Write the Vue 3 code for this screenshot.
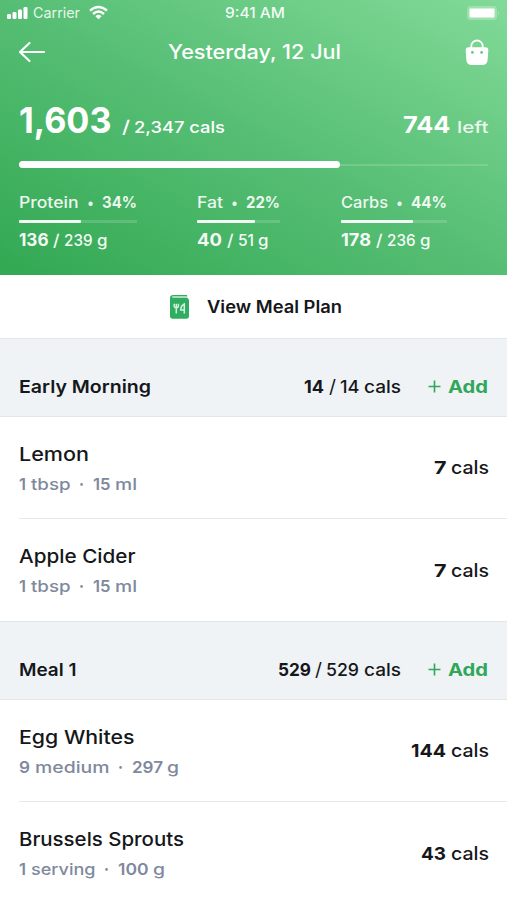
<script setup>
import { h } from 'vue'

// A run of text fitted to a set advance width; its box is as tall as its capitals,
// so the bottom edge of the box is the baseline.
const Word = ({ t, w, s = 17 }) => {
  const height = Math.round(s * 0.73)
  return h('svg', { class: 'word', width: w, height }, [
    h('text', { y: height, 'font-size': s, textLength: w, lengthAdjust: 'spacingAndGlyphs' }, t),
  ])
}
Word.props = ['t', 'w', 's']

const macros = [
  { name: 'Protein', nameW: 59.5, pct: '34%', pctW: 35, width: 118, fill: 52.5, eaten: '136', eatenW: 29.5, goal: '239', goalW: 28.5, goalG: 10.5 },
  { name: 'Fat', nameW: 26, pct: '22%', pctW: 34, width: 83, fill: 70, eaten: '40', eatenW: 25, goal: '51', goalW: 16, goalG: 10.5 },
  { name: 'Carbs', nameW: 47, pct: '44%', pctW: 36, width: 106, fill: 68, eaten: '178', eatenW: 30, goal: '236', goalW: 28.5, goalG: 10.5 },
]

const meals = [
  {
    name: 'Early Morning', nameW: 132, eaten: '14', eatenW: 20, goal: '14', goalW: 19.5,
    foods: [
      { name: 'Lemon', nameW: 70, n: '1', nW: 7, unit: 'tbsp', unitW: 39.5, q: '15', qW: 17.5, qUnit: 'ml', qUnitW: 22, cals: '7', calsW: 12.5 },
      { name: 'Apple Cider', nameW: 116.5, n: '1', nW: 7, unit: 'tbsp', unitW: 39.5, q: '15', qW: 17.5, qUnit: 'ml', qUnitW: 22, cals: '7', calsW: 12.5 },
    ],
  },
  {
    name: 'Meal 1', nameW: 57.5, eaten: '529', eatenW: 33, goal: '529', goalW: 33,
    foods: [
      { name: 'Egg Whites', nameW: 115.5, n: '9', nW: 11, unit: 'medium', unitW: 74.5, q: '297', qW: 31, qUnit: 'g', qUnitW: 12, cals: '144', calsW: 35 },
      { name: 'Brussels Sprouts', nameW: 165, n: '1', nW: 7, unit: 'serving', unitW: 64.5, q: '100', qW: 30.5, qUnit: 'g', qUnitW: 12, cals: '43', calsW: 25 },
    ],
  },
]
</script>

<template>
  <main class="screen">
    <header class="hero">
      <div class="status">
        <div class="carrier">
          <svg width="21" height="13" viewBox="0 0 21 13">
            <rect x="0" y="8" width="4" height="5" rx="1.2" />
            <rect x="5.5" y="6" width="4" height="7" rx="1.2" />
            <rect x="11" y="3.5" width="4" height="9.5" rx="1.2" />
            <rect x="16.5" y="1" width="4" height="12" rx="1.2" />
          </svg>
          <Word class="dim" t="Carrier" :w="47" :s="14.5" />
          <svg class="wifi" width="19" height="13" viewBox="0 0 19 13">
            <path d="M1 4.6Q9.5 -2.6 18 4.6" />
            <path d="M4 8Q9.5 3.2 15 8" />
            <path class="solid" d="M6.4 10.2Q9.5 7.4 12.6 10.2L9.5 13.2Z" />
          </svg>
        </div>
        <Word class="w5 time" t="9:41 AM" :w="60" :s="14.5" />
        <svg class="battery" width="33" height="14" viewBox="0 0 33 14">
          <rect class="shell" x="0" y="0" width="30" height="14" rx="3.5" />
          <rect x="2.5" y="2.4" width="25" height="9.2" rx="1" />
          <path class="shell" d="M31 4.5Q33.5 7 31 9.5Z" />
        </svg>
      </div>

      <nav class="nav">
        <svg class="arrow" width="27" height="22" viewBox="0 0 27 22">
          <path d="M10.5 2L1 11L10.5 20M1 11H25" />
        </svg>
        <Word class="w55" t="Yesterday, 12 Jul" :w="173" :s="19.5" />
        <svg class="bag" width="24" height="27" viewBox="0 0 24 27">
          <path class="handle" d="M6.3 10V7.2a5.7 5.7 0 0 1 11.4 0V10" />
          <path d="M3.5 8.3H20.5Q23.5 8.3 23.3 11.3L22.7 20.5Q22.3 26 17 26H7Q1.7 26 1.3 20.5L.7 11.3Q.5 8.3 3.5 8.3Z" />
          <circle class="eye" cx="7.4" cy="13.4" r="1.4" />
          <circle class="eye" cx="16.6" cy="13.4" r="1.4" />
        </svg>
      </nav>

      <div class="totals">
        <Word class="w7" t="1,603" :w="92.5" :s="35.5" />
        <Word class="w5 of" t="/" :w="8" :s="17.5" />
        <Word class="w55 goal" t="2,347 cals" :w="91" :s="16.5" />
        <Word class="w7 left" t="744" :w="47.5" :s="23" />
        <Word class="w55 dim" t="left" :w="31.5" :s="16.5" />
      </div>

      <div class="track"><div class="fill" /></div>

      <div class="macros">
        <section v-for="m in macros" :key="m.name" class="macro" :style="{ width: m.width + 'px' }">
          <div class="macro-head">
            <Word class="w55" :t="m.name" :w="m.nameW" :s="15.5" />
            <Word class="w5" t="•" :w="7" :s="14.5" />
            <Word class="w7" :t="m.pct" :w="m.pctW" :s="15.5" />
          </div>
          <div class="mini"><div class="mini-fill" :style="{ width: m.fill + '%' }" /></div>
          <div class="macro-nums">
            <Word class="w7" :t="m.eaten" :w="m.eatenW" :s="17.5" />
            <Word class="w5" t="/" :w="6.5" :s="16.5" />
            <Word class="w55" :t="m.goal" :w="m.goalW" :s="16" />
            <Word class="w55 unit" t="g" :w="m.goalG" :s="16" />
          </div>
        </section>
      </div>
    </header>

    <div class="plan">
      <svg class="book" width="19" height="24" viewBox="0 0 19 24">
        <path class="page" d="M3 .6H17.4V4H3Z" />
        <path class="cover" d="M3.4 0H17V1.1H3.6Q2.3 1.1 2.3 2T3.6 2.9H16.4Q19 2.9 19 5.4V21Q19 23.7 16.4 23.7H2.7Q0 23.7 0 21V3.3Q0 0 3.4 0Z" />
        <path class="tool" d="M4.2 8.8V11.2Q4.4 13 6.3 13T8.4 11.2V8.8M6.3 8.8V18.6M14.3 18.6V9Q10.8 10.7 10.8 15H14.3" />
      </svg>
      <Word class="w6" t="View Meal Plan" :w="135" :s="17" />
    </div>

    <section v-for="meal in meals" :key="meal.name">
      <div class="meal">
        <Word class="w6" :t="meal.name" :w="meal.nameW" :s="17.5" />
        <div class="amount">
          <Word class="w65" :t="meal.eaten" :w="meal.eatenW" :s="17.5" />
          <Word class="slash" t="/" :w="7" :s="18.5" />
          <Word class="w45" :t="meal.goal" :w="meal.goalW" :s="17.5" />
          <Word class="w45 cals" t="cals" :w="37" :s="17.5" />
        </div>
        <div class="add">
          <svg width="13" height="13" viewBox="0 0 13 13"><path d="M6.5 .5V12.5M.5 6.5H12.5" /></svg>
          <Word class="w7" t="Add" :w="40" :s="17.5" />
        </div>
      </div>
      <article v-for="f in meal.foods" :key="f.name" class="food">
        <div class="info">
          <Word class="w45" :t="f.name" :w="f.nameW" :s="19" />
          <div class="portion">
            <Word class="w6" :t="f.n" :w="f.nW" :s="16" />
            <Word class="w45 gap" :t="f.unit" :w="f.unitW" :s="16" />
            <Word class="w7 dot" t="·" :w="5" :s="17" />
            <Word class="w6" :t="f.q" :w="f.qW" :s="16" />
            <Word class="w45 gap" :t="f.qUnit" :w="f.qUnitW" :s="16" />
          </div>
        </div>
        <div class="kcal">
          <Word class="w65" :t="f.cals" :w="f.calsW" :s="18" />
          <Word class="w45 gap" t="cals" :w="38" :s="18" />
        </div>
      </article>
    </section>
  </main>
</template>

<style>
body { background: #fff; }
</style>

<style scoped>
.screen {
  width: 507px;
  height: 900px;
  overflow: hidden;
  font-family: Inter, "Open Sans", sans-serif;
  font-weight: 400;
  color: #15171a;
  background: #fff;
}
svg { display: block; flex: none; overflow: visible; }
.word { fill: currentColor; }
.w45 { font-weight: 450; }
.w5 { font-weight: 500; }
.w55 { font-weight: 550; }
.w6 { font-weight: 600; }
.w65 { font-weight: 650; }
.w7 { font-weight: 700; }
.dim { opacity: .86; }

.hero {
  box-sizing: border-box;
  height: 275px;
  padding: 6px 19px 0;
  color: #fff;
  background: linear-gradient(to top right, #32a852, #56be74 50%, #82da98);
}
.status {
  display: grid;
  grid-template-columns: 1fr auto 1fr;
  align-items: center;
  height: 13px;
  margin: 0 -12px;
  fill: #fff;
}
.status > * { margin-top: -1px; }
.carrier { display: flex; align-items: center; gap: 5px; }
.wifi { margin-left: 4px; fill: none; stroke: #fff; stroke-width: 2.4; }
.wifi .solid { fill: #fff; stroke: none; }
.time { margin-left: 2px; opacity: .92; }
.battery { justify-self: end; margin-top: 0; }
.shell { fill: rgba(255, 255, 255, .25); }

.nav {
  display: grid;
  grid-template-columns: 1fr auto 1fr;
  align-items: center;
  height: 27px;
  margin-top: 20px;
}
.nav > svg { margin-top: -1px; }
.nav .word { margin-left: 1px; }
.arrow { fill: none; stroke: #fff; stroke-width: 2.2; stroke-linecap: round; stroke-linejoin: round; }
.bag { justify-self: end; margin-right: -1px; fill: #fff; }
.handle { fill: none; stroke: #fff; stroke-width: 1.8; }
.eye { fill: #69c584; }

.totals { display: flex; align-items: flex-end; height: 26px; margin-top: 41px; }
.of { margin-left: 10px; }
.goal { margin-left: 4px; }
.left { margin: 0 6px 0 auto; }

.track {
  display: flex;
  align-items: center;
  height: 8px;
  margin-top: 27.5px;
  background: linear-gradient(rgba(255, 255, 255, .15), rgba(255, 255, 255, .15)) center / 100% 2px no-repeat;
}
.fill { width: 68.5%; height: 7.5px; border-radius: 4px; background: #fff; }

.macros { display: flex; gap: 60px; margin-top: 28.5px; }
.macro:last-child { margin-left: 1px; }
.macro-head { display: flex; align-items: flex-end; justify-content: space-between; opacity: .9; }
.mini { height: 2.5px; margin: 12px 0 10.5px; background: rgba(255, 255, 255, .16); }
.mini-fill { height: 100%; border-radius: 1px; background: rgba(255, 255, 255, .92); }
.macro-nums { display: flex; align-items: flex-end; gap: 4.5px; opacity: .94; }

.plan {
  display: flex;
  align-items: center;
  justify-content: center;
  gap: 18px;
  box-sizing: border-box;
  height: 63px;
  padding-left: 4px;
}
.page { fill: #a8dcb9; }
.cover { fill: #2fad60; }
.tool { fill: none; stroke: #d5f2df; stroke-width: 1.5; }

.meal {
  display: flex;
  align-items: flex-end;
  box-sizing: border-box;
  height: 79px;
  padding: 0 19px 23px;
  border: solid #e2e7ea;
  border-width: 1px 0;
  background: #eff3f6;
}
.amount { display: flex; align-items: flex-end; margin-left: auto; }
.slash { margin: 0 4px 0 4.5px; }
.cals { margin-left: 4.5px; }
.add { display: flex; align-items: flex-end; gap: 7px; margin-left: 27.5px; color: #30a75b; }
.add svg:first-child { fill: none; stroke: #30a75b; stroke-width: 1.6; }

.food {
  display: flex;
  justify-content: space-between;
  box-sizing: border-box;
  height: 102px;
  margin-left: 19px;
  padding: 30px 18.5px 0 0;
}
.food:not(:last-child) { border-bottom: 1px solid #e6e9ec; }
.food:last-child .kcal { height: 28px; }
.portion { display: flex; align-items: flex-end; margin-top: 17px; color: #7f899d; }
.gap { margin-left: 4.5px; }
.dot { margin: 0 9px 0 8.5px; }
.kcal { display: flex; align-items: flex-end; height: 27px; }
</style>
